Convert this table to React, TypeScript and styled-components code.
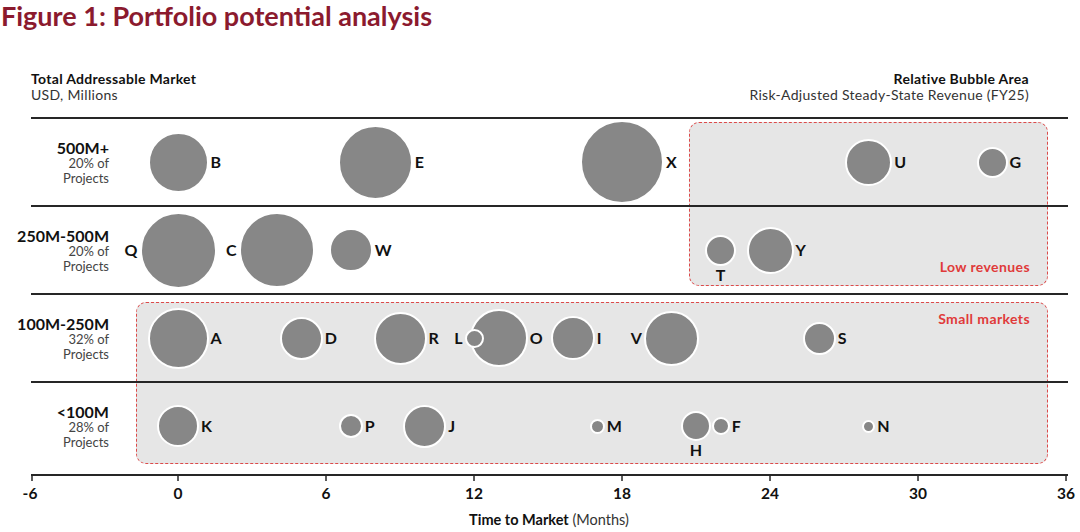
import React from "react";
import styled, { createGlobalStyle } from "styled-components";

const GlobalStyle = createGlobalStyle`
  html, body { margin: 0; padding: 0; background: #ffffff; }
  body { font-family: "Lato", "Noto Sans", sans-serif; color: #111; }
`;

const PX_PER_MONTH = 24.667;
const PLOT_ZERO = 69; // x of month 0 inside the plot cell
const AXIS_ZERO = 147; // x of month 0 inside the axis svg

type Side = "r" | "l" | "b";
type BubbleData = { id: string; m: number; r: number; side?: Side };
type RowData = { title: string; pct: string; bubbles: BubbleData[] };

const rows: RowData[] = [
  {
    title: "500M+",
    pct: "20%",
    bubbles: [
      { id: "B", m: 0, r: 30.5 },
      { id: "E", m: 8, r: 37.5 },
      { id: "X", m: 18, r: 42 },
      { id: "U", m: 28, r: 23.5 },
      { id: "G", m: 33, r: 15.5 },
    ],
  },
  {
    title: "250M-500M",
    pct: "20%",
    bubbles: [
      { id: "Q", m: 0, r: 38.5, side: "l" },
      { id: "C", m: 4, r: 38, side: "l" },
      { id: "W", m: 7, r: 22 },
      { id: "T", m: 22, r: 15.5, side: "b" },
      { id: "Y", m: 24, r: 23.5 },
    ],
  },
  {
    title: "100M-250M",
    pct: "32%",
    bubbles: [
      { id: "A", m: 0, r: 30.5 },
      { id: "D", m: 5, r: 21.5 },
      { id: "R", m: 9, r: 26.5 },
      { id: "O", m: 13, r: 29 },
      { id: "L", m: 12, r: 9.5, side: "l" },
      { id: "I", m: 16, r: 22 },
      { id: "V", m: 20, r: 27.5, side: "l" },
      { id: "S", m: 26, r: 16.5 },
    ],
  },
  {
    title: "<100M",
    pct: "28%",
    bubbles: [
      { id: "K", m: 0, r: 21 },
      { id: "P", m: 7, r: 12 },
      { id: "J", m: 10, r: 21.5 },
      { id: "M", m: 17, r: 7.5 },
      { id: "H", m: 21, r: 15, side: "b" },
      { id: "F", m: 22, r: 9 },
      { id: "N", m: 28, r: 6.5 },
    ],
  },
];

const ticks = [-6, 0, 6, 12, 18, 24, 30, 36];

const Page = styled.div`
  width: 1080px;
  height: 532px;
  overflow: hidden;
  position: relative;
`;

const Title = styled.h1`
  margin: 0;
  padding-left: 1px;
  font-family: "Lato", "Noto Sans", sans-serif;
  font-weight: 700;
  font-size: 27px;
  line-height: 32px;
  color: #8b1a2e;
  white-space: nowrap;
`;

const Header = styled.div`
  display: flex;
  justify-content: space-between;
  margin: 39px 51px 0 31px;
`;

const HeaderBlock = styled.div<{ $right?: boolean }>`
  display: flex;
  flex-direction: column;
  align-items: ${(p) => (p.$right ? "flex-end" : "flex-start")};
`;

const HeadTitle = styled.div`
  font-size: 14px;
  line-height: 16px;
  letter-spacing: 0.3px;
  font-weight: 700;
  color: #111;
  white-space: nowrap;
`;

const HeadSub = styled.div`
  font-size: 14px;
  line-height: 16px;
  letter-spacing: 0.3px;
  font-weight: 400;
  color: #333;
  white-space: nowrap;
`;

const Chart = styled.div`
  position: relative;
  z-index: 0;
  width: 1037px;
  margin: 14px 0 0 31px;
`;

const Row = styled.div`
  display: flex;
  height: 88px;
  box-sizing: border-box;
  border-top: 2px solid #262626;
`;

const RowLabel = styled.div`
  flex: none;
  width: 78px;
  display: flex;
  flex-direction: column;
  align-items: flex-end;
  justify-content: center;
  padding-top: 1px;
`;

const RowTitle = styled.div`
  font-size: 16px;
  line-height: 16px;
  font-weight: 700;
  color: #111;
  white-space: nowrap;
`;

const RowSub = styled.div`
  font-size: 13px;
  line-height: 15px;
  color: #444;
  white-space: nowrap;
`;

const Plot = styled.div`
  flex: 1;
  position: relative;
`;

const Zone = styled.div<{ $x: number; $y: number; $w: number; $h: number }>`
  position: absolute;
  z-index: -1;
  left: ${(p) => p.$x}px;
  top: ${(p) => p.$y}px;
  width: ${(p) => p.$w}px;
  height: ${(p) => p.$h}px;
  box-sizing: border-box;
  background: #e6e6e6;
  border: 1.5px dashed #dc4a4a;
  border-radius: 10px;
`;

const ZoneLabel = styled.div<{ $bottom?: boolean }>`
  position: absolute;
  right: 17px;
  ${(p) => (p.$bottom ? "bottom: 10px;" : "top: 8px;")}
  font-size: 14px;
  line-height: 16px;
  letter-spacing: 0.4px;
  font-weight: 700;
  color: #e03a3a;
  white-space: nowrap;
`;

const Circle = styled.div`
  position: absolute;
  box-sizing: border-box;
  border-radius: 50%;
  background: #878787;
  border: 2px solid #ffffff;
`;

const BubbleLabel = styled.span<{ $side: Side }>`
  position: absolute;
  font-size: 16px;
  line-height: 16px;
  font-weight: 700;
  color: #111;
  ${(p) =>
    p.$side === "r"
      ? "left: calc(100% + 4px); top: 50%; transform: translateY(-50%);"
      : p.$side === "l"
      ? "right: calc(100% + 4px); top: 50%; transform: translateY(-50%);"
      : "top: calc(100% + 3px); left: 50%; transform: translateX(-50%);"}
`;

const AxisSvg = styled.svg`
  display: block;
  overflow: visible;
  margin-left: 31px;
  text {
    font-family: "Lato", "Noto Sans", sans-serif;
    fill: #111;
  }
`;

const CENTER_Y = 43;

function Bubble({ b }: { b: BubbleData }) {
  const cx = PLOT_ZERO + b.m * PX_PER_MONTH;
  const d = b.r * 2;
  return (
    <Circle style={{ left: cx - b.r, top: CENTER_Y - b.r, width: d, height: d }}>
      <BubbleLabel $side={b.side ?? "r"}>{b.id}</BubbleLabel>
    </Circle>
  );
}

function Axis() {
  return (
    <AxisSvg width={1037} height={63} viewBox="0 0 1037 63">
      <line x1={0} y1={6} x2={1037} y2={6} stroke="#262626" strokeWidth={2} />
      {ticks.map((t) => {
        const x = Math.min(1036, Math.max(1, AXIS_ZERO + t * PX_PER_MONTH));
        return (
          <g key={t}>
            <line x1={x} y1={6} x2={x} y2={12} stroke="#262626" strokeWidth={1.5} />
            <text x={AXIS_ZERO + t * PX_PER_MONTH} y={30} textAnchor="middle" fontSize={15.5} fontWeight={700}>
              {t}
            </text>
          </g>
        );
      })}
      <text x={518} y={56} textAnchor="middle" fontSize={14.5}>
        <tspan fontWeight={700}>Time to Market</tspan>
        <tspan fontWeight={400} fill="#333"> (Months)</tspan>
      </text>
    </AxisSvg>
  );
}

export default function App() {
  return (
    <Page>
      <GlobalStyle />
      <Title>Figure 1: Portfolio potential analysis</Title>
      <Header>
        <HeaderBlock>
          <HeadTitle>Total Addressable Market</HeadTitle>
          <HeadSub>USD, Millions</HeadSub>
        </HeaderBlock>
        <HeaderBlock $right>
          <HeadTitle>Relative Bubble Area</HeadTitle>
          <HeadSub>Risk-Adjusted Steady-State Revenue (FY25)</HeadSub>
        </HeaderBlock>
      </Header>
      <Chart>
        <Zone $x={658} $y={5} $w={359} $h={164}>
          <ZoneLabel $bottom>Low revenues</ZoneLabel>
        </Zone>
        <Zone $x={105} $y={185} $w={912} $h={162}>
          <ZoneLabel>Small markets</ZoneLabel>
        </Zone>
        {rows.map((row) => (
          <Row key={row.title}>
            <RowLabel>
              <RowTitle>{row.title}</RowTitle>
              <RowSub>{row.pct} of</RowSub>
              <RowSub>Projects</RowSub>
            </RowLabel>
            <Plot>
              {row.bubbles.map((b) => (
                <Bubble key={b.id} b={b} />
              ))}
            </Plot>
          </Row>
        ))}
      </Chart>
      <Axis />
    </Page>
  );
}
